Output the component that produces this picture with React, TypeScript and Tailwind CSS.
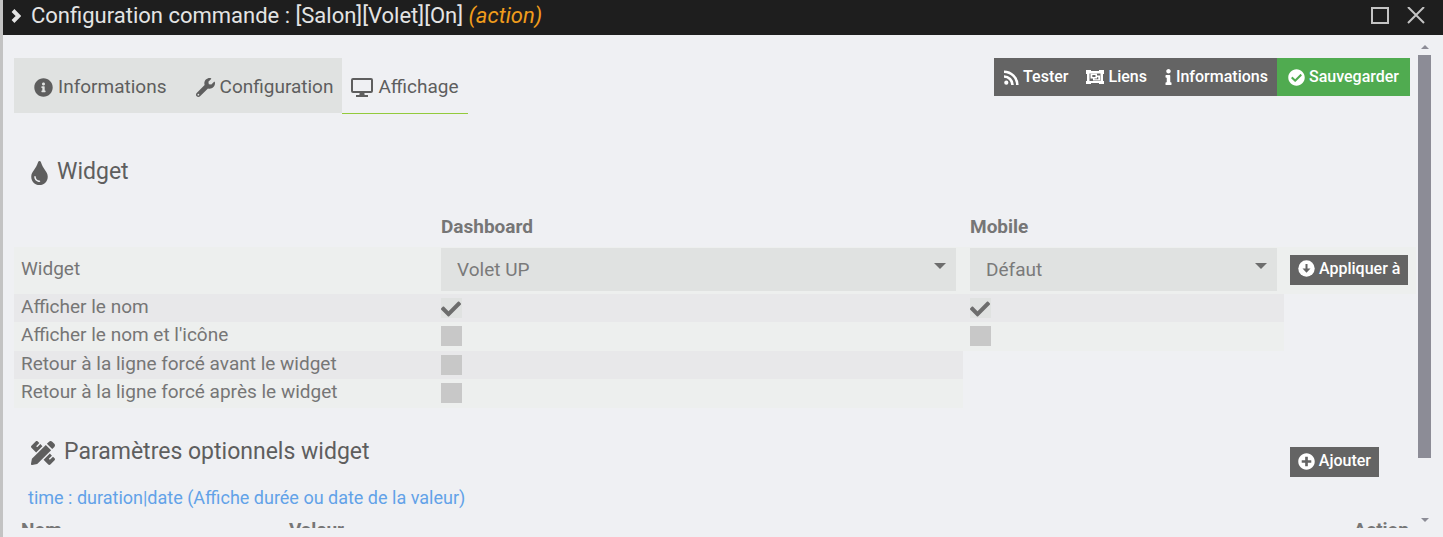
import {useState} from "react"
import type {ReactNode} from "react"
import {
    FaCheck,
    FaCheckCircle,
    FaInfo,
    FaInfoCircle,
    FaPencilRuler,
    FaPlusCircle,
    FaTint,
    FaWrench,
} from "react-icons/fa"

type TabId = "informations" | "configuration" | "affichage"

interface Option {
    id: string
    label: string
    dashboard: boolean
    mobile?: boolean
}

const OPTIONS: Option[] = [
    {id: "name", label: "Afficher le nom", dashboard: true, mobile: true},
    {id: "nameIcon", label: "Afficher le nom et l'icône", dashboard: false, mobile: false},
    {id: "breakBefore", label: "Retour à la ligne forcé avant le widget", dashboard: false},
    {id: "breakAfter", label: "Retour à la ligne forcé après le widget", dashboard: false},
]

const ScreenIcon = () => (
    <svg viewBox="0 0 22 19" className="h-[19px] w-[22px]" fill="none" stroke="currentColor" strokeWidth="2">
        <rect x="1" y="1" width="20" height="13" rx="1" />
        <path d="M8.800 14h4.400l.6 4H8.200z" fill="currentColor" stroke="none" />
        <path d="M5 18h12" />
    </svg>
)

const RssIcon = () => (
    <svg viewBox="0 0 15 15" className="size-[15px]" fill="none" stroke="currentColor" strokeWidth="2.600">
        <circle cx="2.300" cy="12.700" r="2.100" fill="currentColor" stroke="none" />
        <path d="M0 6.500A8.500 8.500 0 0 1 8.500 15M0 1.700A13.300 13.300 0 0 1 13.300 15" />
    </svg>
)

const GroupIcon = () => (
    <svg viewBox="0 0 18 16" className="h-4 w-[18px]" fill="currentColor">
        <path d="M0 1h5v1h8V1h5v4h-1v7h1v3h-5v-1H5v1H0v-3h1V5H0zM3.500 4.500v7.500h11V4.500z" fillRule="evenodd" />
        <path d="M4.500 4.500h6.500v2h3v5H7v-2H4.500zM6.300 6v2h3.200V6zM11 8.200v1.300H8.500v.7h3.800v-2z" fillRule="evenodd" />
    </svg>
)

const ArrowCircleIcon = () => (
    <svg viewBox="0 0 17 17" className="size-[17px]">
        <circle cx="8.500" cy="8.500" r="8.200" fill="currentColor" />
        <path d="M7.500 4h2v4.500h3l-4 4.300-4-4.300h3z" fill="#646464" />
    </svg>
)

const Checkbox = ({label, initial}: {label: string; initial: boolean}) => {
    const [checked, setChecked] = useState(initial)
    return (
        <span className="relative block h-5 w-[21px]">
            <input
                type="checkbox"
                aria-label={label}
                checked={checked}
                onChange={e => setChecked(e.target.checked)}
                className="block h-5 w-[21px] appearance-none bg-[#c8c8c8] checked:bg-[#e0e2e1]"
            />
            {checked && <FaCheck className="pointer-events-none absolute top-px left-0 size-5 text-[#6d6d6d]" />}
        </span>
    )
}

const Select = ({label, options}: {label: string; options: string[]}) => (
    <div className="relative">
        <select
            aria-label={label}
            className="block h-[43px] w-full appearance-none bg-[#e0e2e1] px-4 pt-0.5 text-[19px] text-[#7a7a7a]"
        >
            {options.map(o => <option key={o}>{o}</option>)}
        </select>
        <svg viewBox="0 0 12 6" className="pointer-events-none absolute top-[15px] right-[10px] h-[6px] w-3 fill-[#6d6d6d]">
            <path d="M0 0h12L6 6z" />
        </svg>
    </div>
)

const SmallButton = ({icon, children}: {icon: ReactNode; children: ReactNode}) => (
    <button type="button" className="flex h-[30px] items-center gap-1 bg-[#646464] px-2 pb-0.5 text-base font-medium whitespace-nowrap text-white">
        {icon}
        {children}
    </button>
)

const TABS: {id: TabId; label: string; icon: ReactNode; pad: string}[] = [
    {id: "informations", label: "Informations", icon: <FaInfoCircle className="size-[19px]" />, pad: "pl-5 pr-5"},
    {id: "configuration", label: "Configuration", icon: <FaWrench className="size-[19px]" />, pad: "px-[9px]"},
    {id: "affichage", label: "Affichage", icon: <ScreenIcon />, pad: "px-[9px]"},
]

export default function App() {
    const [tab, setTab] = useState<TabId>("affichage")

    return (
        <div className="flex h-screen bg-[#eff0f3] font-[Roboto,sans-serif] text-[19px] text-[#767676]">
            <div className="w-[3px] shrink-0 bg-[#c3c3c3]" />
            <div className="flex min-w-0 flex-1 flex-col">
                <header className="flex h-[35px] shrink-0 items-center bg-[#1e1e1e] pr-[18px] pb-1 pl-2 text-[#e4e4e4]">
                    <svg viewBox="0 0 10 14" className="h-[14px] w-[10px]" fill="none" stroke="currentColor" strokeWidth="4">
                        <path d="M2 1.500 7.500 7 2 12.500" />
                    </svg>
                    <h1 className="ml-[10px] flex-1 text-[22px] leading-7">
                        Configuration commande : [Salon][Volet][On] <em className="text-[#f09c1c]">(action)</em>
                    </h1>
                    <div className="flex items-center gap-[18px] text-[#c4c4c4]">
                        <button type="button" aria-label="Agrandir">
                            <svg viewBox="0 0 18 18" className="block size-[18px]" fill="none" stroke="currentColor" strokeWidth="2">
                                <path d="M1 1h16v15H1z" />
                            </svg>
                        </button>
                        <button type="button" aria-label="Fermer">
                            <svg viewBox="0 0 18 18" className="block size-[18px]" fill="none" stroke="currentColor" strokeWidth="2">
                                <path d="m1 0 16 16M17 0 1 16" />
                            </svg>
                        </button>
                    </div>
                </header>

                <div className="flex min-h-0 flex-1 pr-3 pb-[9px]">
                    <main className="min-w-0 flex-1 overflow-hidden pt-[23px] pr-0.5 pl-[11px]">
                        <div className="flex items-start justify-between pr-[6px]">
                            <div role="tablist" className="flex">
                                {TABS.map(t => (
                                    <button
                                        key={t.id}
                                        type="button"
                                        role="tab"
                                        aria-selected={tab === t.id}
                                        onClick={() => setTab(t.id)}
                                        className={`flex h-14 items-center gap-[5px] border-b pt-[3px] text-[#5e5e5e] ${t.pad} ${
                                            tab === t.id ? "border-[#93ca3b]" : "border-[#eff0f3] bg-[#e0e2e1]"
                                        }`}
                                    >
                                        {t.icon}
                                        {t.label}
                                    </button>
                                ))}
                            </div>
                            <div className="flex text-base font-medium text-white">
                                <button type="button" className="flex h-[38px] items-center gap-1 bg-[#646464] pr-[9px] pl-[10px]">
                                    <RssIcon />
                                    Tester
                                </button>
                                <button type="button" className="flex h-[38px] items-center gap-1 bg-[#646464] px-[9px]">
                                    <GroupIcon />
                                    Liens
                                </button>
                                <button type="button" className="flex h-[38px] items-center gap-1 bg-[#646464] px-[9px]">
                                    <FaInfo className="h-4 w-[7px]" />
                                    Informations
                                </button>
                                <button type="button" className="flex h-[38px] items-center gap-1 bg-[#50ab50] px-[11px]">
                                    <FaCheckCircle className="size-[17px]" />
                                    Sauvegarder
                                </button>
                            </div>
                        </div>

                        <section className="mt-[42px]">
                            <h2 className="flex h-8 items-center gap-[9px] pt-px pl-[17px] text-[23px] text-[#5e5e5e]">
                                <FaTint className="h-6 w-[17px]" />
                                Widget
                            </h2>
                            <table className="mt-[19px] w-full table-fixed text-left leading-6">
                                <colgroup>
                                    <col className="w-[420px]" />
                                    <col />
                                    <col className="w-[321px]" />
                                    <col className="w-[132px]" />
                                </colgroup>
                                <thead>
                                    <tr className="h-10">
                                        <td />
                                        <th className="px-[7px] font-bold">Dashboard</th>
                                        <th className="px-[7px] font-bold">Mobile</th>
                                        <td />
                                    </tr>
                                </thead>
                                <tbody>
                                    <tr className="h-[47px] bg-[#edefee]">
                                        <td className="px-[7px] pb-1">Widget</td>
                                        <td className="px-[7px] pb-[3px]">
                                            <Select label="Widget dashboard" options={["Volet UP", "Défaut"]} />
                                        </td>
                                        <td className="px-[7px] pb-[3px]">
                                            <Select label="Widget mobile" options={["Défaut", "Volet UP"]} />
                                        </td>
                                        <td className="pb-0.5 pl-[6px]">
                                            <SmallButton icon={<ArrowCircleIcon />}>Appliquer à</SmallButton>
                                        </td>
                                    </tr>
                                    {OPTIONS.map(o => (
                                        <tr
                                            key={o.id}
                                            className="odd:h-[29px] even:h-7 odd:[&>td]:bg-[#edefee] even:[&>td]:bg-[#e8e8ea]"
                                        >
                                            <td className="px-[7px] pb-[3px]">{o.label}</td>
                                            <td className="px-[7px] pb-px">
                                                <Checkbox label={`${o.label} (dashboard)`} initial={o.dashboard} />
                                            </td>
                                            {o.mobile !== undefined && (
                                                <td className="px-[7px] pb-px">
                                                    <Checkbox label={`${o.label} (mobile)`} initial={o.mobile} />
                                                </td>
                                            )}
                                        </tr>
                                    ))}
                                </tbody>
                            </table>
                        </section>

                        <section className="mt-7">
                            <div className="flex items-start justify-between pr-[37px]">
                                <h2 className="flex h-8 items-center gap-[9px] pt-px pl-[17px] text-[23px] text-[#5e5e5e]">
                                    <FaPencilRuler className="size-6" />
                                    Paramètres optionnels widget
                                </h2>
                                <div className="pt-[11px]">
                                    <SmallButton icon={<FaPlusCircle className="size-[17px]" />}>Ajouter</SmallButton>
                                </div>
                            </div>
                            <p className="mt-[7px] pl-[14px] text-lg leading-7 text-[#62a2e8]">
                                time : duration|date (Affiche durée ou date de la valeur)
                            </p>
                            <table className="w-full table-fixed leading-9">
                                <thead>
                                    <tr>
                                        <th className="w-[268px] px-[7px] text-left font-bold">Nom</th>
                                        <th className="px-[7px] text-left font-bold">Valeur</th>
                                        <th className="w-[140px] px-[7px] text-right font-bold">Action</th>
                                    </tr>
                                </thead>
                            </table>
                        </section>
                    </main>

                    <div aria-hidden="true" className="flex w-[13px] shrink-0 flex-col items-center pt-[10px] pb-[6px]">
                        <svg viewBox="0 0 8 4" className="h-1 w-2 shrink-0 fill-[#8c8c96]">
                            <path d="M0 4h8L4 0z" />
                        </svg>
                        <div className="mt-[6px] min-h-0 w-full flex-1">
                            <div className="h-[87%] bg-[#8c8c96]" />
                        </div>
                        <svg viewBox="0 0 8 4" className="h-1 w-2 shrink-0 fill-[#8c8c96]">
                            <path d="M0 0h8L4 4z" />
                        </svg>
                    </div>
                </div>
            </div>
        </div>
    )
}
